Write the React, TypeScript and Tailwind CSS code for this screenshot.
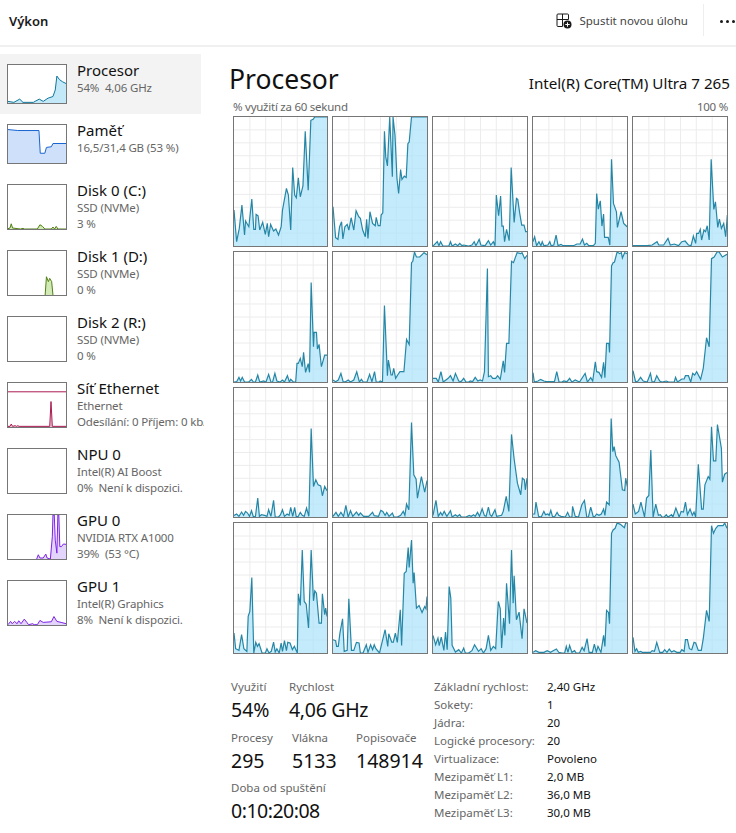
import React from 'react';

type CoreChart = { ox: number; oy: number; w: number; h: number; pts: string };

// points are in 3x pixel coords so they can be read straight off a zoomed crop
const cores: CoreChart[] = [
  { ox: 25, oy: 65, w: 282, h: 388, pts: '25,345 33,440 41,400 49,330 57,420 60,378 70,395 79,312 85,403 90,403 92,358 98,362 103,405 112,382 120,418 126,385 130,425 136,388 145,408 152,402 160,420 168,395 172,345 184,280 190,300 197,405 203,217 209,300 214,308 220,248 226,305 234,272 241,108 250,285 258,75 265,72 270,65 307,65' },
  { ox: 322, oy: 65, w: 285, h: 388, pts: '322,335 330,428 337,433 342,395 348,380 352,432 358,395 365,388 370,405 377,368 385,405 392,347 400,365 405,370 412,405 420,425 424,373 428,430 434,350 442,385 450,392 453,367 459,392 465,392 468,360 473,353 478,108 482,185 487,212 494,65 502,245 504,65 510,120 516,250 521,295 527,223 531,253 538,243 544,247 549,145 553,140 560,65 607,65' },
  { ox: 7, oy: 65, w: 285, h: 388, pts: '7,453 20,440 25,452 30,440 37,453 55,453 60,440 65,453 75,447 82,452 88,445 95,452 100,450 115,453 125,450 132,440 137,452 147,433 152,450 165,452 175,437 182,450 190,440 195,452 199,300 206,362 212,303 216,393 220,393 224,440 230,403 238,437 244,217 253,382 260,310 264,313 270,355 276,390 283,390 288,410 293,410' },
  { ox: 307, oy: 65, w: 285, h: 388, pts: '307,440 312,425 318,452 325,440 331,452 335,440 340,452 352,450 358,440 362,452 370,450 377,420 383,452 392,448 398,452 410,452 430,452 440,447 450,447 457,432 463,450 470,445 476,452 490,452 496,445 500,295 505,342 511,317 516,393 521,357 524,427 535,427 540,450 545,192 551,325 560,350 563,397 574,350 582,385 592,395' },
  { ox: 607, oy: 65, w: 285, h: 388, pts: '607,452 640,452 650,452 665,450 680,440 685,450 700,450 713,430 720,450 732,447 745,452 755,440 765,438 775,450 783,452 790,423 797,445 800,415 806,415 811,403 815,435 822,405 827,410 832,392 838,435 844,192 852,343 857,320 864,397 869,372 875,400 882,385 888,425 893,360' },

  { ox: 25, oy: 20, w: 282, h: 391, pts: '25,411 33,410 40,397 45,408 50,397 57,411 70,411 78,403 84,411 90,411 97,390 103,411 115,408 122,411 130,388 137,411 142,411 149,385 155,408 165,411 172,405 178,411 187,392 193,411 197,403 205,411 212,411 216,355 220,355 226,340 232,365 236,322 242,382 250,356 254,382 259,112 266,305 268,262 275,262 278,312 283,298 290,365 300,330 307,330' },
  { ox: 322, oy: 20, w: 285, h: 391, pts: '322,405 330,410 338,405 346,385 353,411 360,410 368,405 375,411 385,405 394,380 402,411 408,403 414,411 425,411 433,388 440,410 448,380 453,411 462,411 465,408 472,411 478,181 487,392 490,345 498,390 502,390 506,370 512,400 518,390 525,380 537,380 545,283 553,298 560,52 564,48 569,20 575,35 585,35 598,22 607,28' },
  { ox: 622, oy: 20, w: 285, h: 391, pts: '622,400 632,400 638,411 646,380 653,411 668,400 675,392 683,408 690,385 700,408 707,410 715,400 722,411 730,411 735,408 742,410 750,397 758,408 765,405 772,408 778,380 787,70 790,395 797,392 803,400 812,400 818,392 826,403 835,347 839,382 845,295 852,295 860,48 866,52 877,22 888,25 892,22 900,40 907,30' },
  { ox: 7, oy: 20, w: 285, h: 391, pts: '7,383 11,411 22,408 30,403 40,408 48,410 72,410 79,380 86,411 95,411 100,408 110,410 118,400 125,411 135,405 148,411 165,385 172,411 182,398 188,408 196,350 200,380 207,382 215,397 221,352 225,398 230,295 237,295 239,322 245,62 250,52 254,50 262,20 270,25 275,22 278,38 285,22 293,25' },
  { ox: 307, oy: 20, w: 285, h: 391, pts: '307,377 315,411 322,408 330,397 338,408 350,411 360,385 365,411 372,410 379,392 388,408 395,411 408,408 415,411 432,411 436,397 442,411 455,402 462,402 466,392 475,392 482,411 488,385 494,390 500,380 512,403 520,370 530,278 538,305 545,40 553,35 562,20 568,20 578,35 592,27' },

  { ox: 25, oy: 8, w: 282, h: 389, pts: '25,392 33,388 40,395 48,382 54,392 60,380 66,385 72,395 78,378 84,397 90,395 97,340 102,395 108,390 118,392 125,395 130,375 137,395 145,347 150,397 160,397 166,390 172,375 178,395 186,388 192,392 197,368 203,395 209,368 214,397 220,395 226,383 232,392 238,395 245,370 252,395 259,130 266,305 273,285 280,300 288,303 293,333 300,305 307,318' },
  { ox: 322, oy: 8, w: 285, h: 389, pts: '322,395 331,383 338,395 346,383 354,395 361,362 368,397 375,378 382,395 393,382 400,392 405,385 415,395 430,395 442,383 447,393 460,395 467,377 473,380 480,392 485,383 492,395 502,385 507,397 517,397 527,392 535,380 540,392 545,358 552,375 560,112 567,270 574,283 578,340 590,275 600,322 607,287' },
  { ox: 622, oy: 8, w: 285, h: 389, pts: '622,392 631,347 638,395 645,383 650,392 656,380 664,395 675,378 680,397 690,390 696,395 703,390 708,397 722,397 732,392 738,395 745,390 750,395 757,383 763,395 771,372 778,393 783,395 790,367 795,390 800,395 810,375 815,395 830,392 835,380 844,335 852,380 860,148 868,222 878,295 888,330 893,280 899,285 902,315 907,280' },
  { ox: 7, oy: 8, w: 285, h: 389, pts: '7,388 12,388 16,352 24,395 32,397 40,380 45,390 52,388 56,392 61,377 66,395 72,397 80,383 85,392 92,395 105,397 112,383 118,397 125,397 127,365 135,395 145,397 155,360 163,347 170,397 175,397 182,367 190,397 195,395 200,388 207,392 214,388 221,373 225,392 230,352 238,360 244,100 249,200 253,185 258,212 268,232 278,315 285,317 288,280 293,305' },
  { ox: 307, oy: 8, w: 285, h: 389, pts: '307,358 314,388 324,380 331,352 342,397 348,340 355,332 361,195 368,397 376,358 384,392 390,390 395,397 402,397 408,390 413,397 424,390 428,397 437,370 447,397 453,380 460,382 466,352 472,390 480,373 487,392 492,382 497,397 505,238 515,373 520,373 525,300 535,275 540,283 545,125 551,228 558,228 563,118 575,190 578,292 585,268 592,263' },

  { ox: 25, oy: 14, w: 282, h: 391, pts: '25,345 30,392 40,397 48,350 55,392 64,400 68,295 73,280 79,178 85,405 91,373 96,385 101,377 110,405 120,405 125,392 131,405 138,400 145,372 150,402 155,392 162,405 168,375 172,400 178,368 184,398 188,373 195,375 202,395 208,385 217,405 220,227 226,262 232,95 238,250 244,258 251,330 259,95 266,248 270,218 275,225 283,315 290,315 293,227 300,290 303,270 307,295' },
  { ox: 322, oy: 14, w: 285, h: 391, pts: '322,365 330,368 333,385 338,385 343,345 351,302 356,400 365,397 370,242 378,397 385,397 393,373 401,375 405,405 413,405 423,380 428,403 436,380 442,395 447,380 452,392 463,405 480,335 488,385 491,347 500,372 505,372 511,345 517,373 526,275 530,382 538,165 544,160 550,88 553,148 560,65 565,195 568,163 575,270 583,262 592,283 600,265 604,272 607,235' },
  { ox: 622, oy: 14, w: 285, h: 391, pts: '622,352 630,380 637,360 641,383 647,357 655,397 660,342 665,395 671,205 676,240 680,382 690,402 700,395 708,405 715,390 720,405 730,405 740,398 748,380 760,400 768,392 775,405 783,392 790,352 797,397 805,385 812,392 820,250 826,272 830,390 836,300 840,352 845,195 854,317 860,95 865,255 868,173 875,305 883,282 892,362 898,272 907,315' },
  { ox: 7, oy: 14, w: 285, h: 391, pts: '7,403 15,398 25,403 40,403 50,398 60,403 68,398 78,393 85,403 95,405 103,405 108,385 113,403 118,382 125,403 133,398 138,405 148,405 156,388 162,398 171,362 177,403 187,403 193,378 199,402 204,385 213,403 221,352 225,385 230,277 236,283 239,317 245,45 250,35 256,30 262,14 272,18 284,28 288,14 293,14' },
  { ox: 307, oy: 14, w: 285, h: 391, pts: '307,358 313,400 318,392 323,403 330,400 335,403 341,403 360,403 365,398 372,400 379,373 388,403 397,403 403,395 410,403 417,393 424,402 431,398 440,403 450,403 455,395 462,400 466,365 472,365 478,392 485,395 492,373 497,375 505,397 514,397 520,362 530,277 538,310 545,22 551,45 558,30 565,22 580,22 585,14 592,30' },
];

const CoreGraph: React.FC<{ chart: CoreChart }> = ({ chart }) => {
  const { ox, oy, w, h, pts } = chart;
  const first = pts.split(' ')[0].split(',')[0];
  const last = pts.split(' ').slice(-1)[0].split(',')[0];
  const base = oy + h;
  return (
    <div className="border border-[#767676] bg-white min-w-0 min-h-0">
      <svg className="block w-full h-full" viewBox={`${ox} ${oy} ${w} ${h}`} preserveAspectRatio="none">
        {[48, 96, 144, 192, 240].map(x => (
          <line key={x} x1={ox + x} x2={ox + x} y1={oy} y2={base} stroke="#ececec" strokeWidth={3} />
        ))}
        {[1, 2, 3, 4, 5, 6, 7, 8, 9].map(i => (
          <line key={i} x1={ox} x2={ox + w} y1={oy + (h * i) / 10} y2={oy + (h * i) / 10} stroke="#ececec" strokeWidth={3} />
        ))}
        <polygon points={`${first},${base} ${pts} ${last},${base}`} fill="#a9e2f9" fillOpacity={0.7} />
        <polyline points={pts} fill="none" stroke="#117a9c" strokeWidth={3.6} strokeOpacity={0.9} />
      </svg>
    </div>
  );
};

type SideItem = {
  title: string;
  lines: string[];
  stroke: string;
  fill: string;
  oy: number;
  pts?: string;
  hline?: number;
  selected?: boolean;
};

const sideItems: SideItem[] = [
  { title: 'Procesor', lines: ['54%  4,06 GHz'], stroke: '#0b7396', fill: '#c3e9f9', oy: 193, selected: true, pts: '22,305 40,308 58,298 68,308 100,308 105,305 118,298 130,305 145,295 160,290 167,270 172,227 180,238 190,245 200,250' },
  { title: 'Paměť', lines: ['16,5/31,4 GB (53 %)'], stroke: '#1561cf', fill: '#cfe0fb', oy: 373, pts: '22,387 52,390 117,390 121,460 135,460 140,442 155,440 160,430 200,430' },
  { title: 'Disk 0 (C:)', lines: ['SSD (NVMe)', '3 %'], stroke: '#4e7d0f', fill: '#d2eab5', oy: 553, pts: '22,687 28,685 32,672 36,685 60,688 68,686 72,688 112,688 120,675 128,680 135,688 155,688 160,682 165,688 170,680 175,688 200,688' },
  { title: 'Disk 1 (D:)', lines: ['SSD (NVMe)', '0 %'], stroke: '#4e7d0f', fill: '#d2eab5', oy: 31, pts: '136,166 140,110 146,125 150,115 156,125 160,166' },
  { title: 'Disk 2 (R:)', lines: ['SSD (NVMe)', '0 %'], stroke: '#4e7d0f', fill: '#d2eab5', oy: 229 },
  { title: 'Síť Ethernet', lines: ['Ethernet', 'Odesílání: 0 Příjem: 0 kb/s'], stroke: '#a8174f', fill: '#f0c3d5', oy: 427, hline: 454, pts: '22,560 28,560 32,553 36,560 44,558 48,560 52,558 56,560 150,560 154,484 158,560 200,560' },
  { title: 'NPU 0', lines: ['Intel(R) AI Boost', '0%  Není k dispozici.'], stroke: '#7a1fe6', fill: '#e3d4fb', oy: 25 },
  { title: 'GPU 0', lines: ['NVIDIA RTX A1000', '39%  (53 °C)'], stroke: '#7a1fe6', fill: '#e3d4fb', oy: 223, pts: '110,358 115,345 120,355 130,355 138,343 142,355 152,358 158,290 160,223 164,223 167,300 172,340 175,223 178,223 181,320 186,320 192,312 200,313' },
  { title: 'GPU 1', lines: ['Intel(R) Graphics', '8%  Není k dispozici.'], stroke: '#7a1fe6', fill: '#e3d4fb', oy: 421, pts: '22,555 30,545 35,552 42,545 50,552 55,543 62,552 72,538 80,548 85,555 98,552 102,555 112,555 120,542 130,548 155,546 163,530 172,545 185,548 200,552' },
];

const SideThumb: React.FC<{ item: SideItem; tall: boolean }> = ({ item, tall }) => {
  const h = tall ? 135 : 117;
  const base = item.oy + h;
  const { pts } = item;
  const first = pts ? pts.split(' ')[0].split(',')[0] : '0';
  const last = pts ? pts.split(' ').slice(-1)[0].split(',')[0] : '0';
  return (
    <div className={`w-[60px] shrink-0 border border-[#767676] bg-white ${tall ? 'h-[46px]' : 'h-[40px]'}`}>
      <svg className="block w-full h-full" viewBox={`22 ${item.oy} 178 ${h}`} preserveAspectRatio="none">
        {item.hline && <line x1={22} x2={200} y1={item.hline} y2={item.hline} stroke={item.stroke} strokeWidth={3} />}
        {pts && <polygon points={`${first},${base} ${pts} ${last},${base}`} fill={item.fill} />}
        {pts && <polyline points={pts} fill="none" stroke={item.stroke} strokeWidth={3} />}
      </svg>
    </div>
  );
};

const Sidebar: React.FC = () => (
  <div className="w-[204px] shrink-0 pt-[7px] overflow-hidden">
    {sideItems.map(item => {
      const tall = item.lines.length > 1;
      return (
        <div
          key={item.title}
          className={`flex w-[201px] pl-[7px] ${tall ? 'h-[66px]' : 'h-[60px]'} ${item.selected ? 'bg-[#f3f3f3]' : ''} pt-[10px] items-start`}
        >
          <SideThumb item={item} tall={tall} />
          <div className="ml-[10px] -mt-[4px] whitespace-nowrap">
            <div className="text-[15px] leading-[20px] text-[#111]">{item.title}</div>
            {item.lines.map(line => (
              <div key={line} className="text-[11.5px] tracking-[-0.15px] leading-[16px] text-[#666] whitespace-pre">{line}</div>
            ))}
          </div>
        </div>
      );
    })}
  </div>
);

const Stat: React.FC<{ label: string; value: string; className?: string; valueClass?: string }> = ({ label, value, className, valueClass }) => (
  <div className={className}>
    <div className="text-[11.5px] leading-[18px] text-[#666]">{label}</div>
    <div className={`text-[19.5px] leading-[28px] text-[#111] ${valueClass ?? ''}`}>{value}</div>
  </div>
);

const specs = [
  ['Základní rychlost:', '2,40 GHz'],
  ['Sokety:', '1'],
  ['Jádra:', '20'],
  ['Logické procesory:', '20'],
  ['Virtualizace:', 'Povoleno'],
  ['Mezipaměť L1:', '2,0 MB'],
  ['Mezipaměť L2:', '36,0 MB'],
  ['Mezipaměť L3:', '30,0 MB'],
];

export default function App() {
  return (
    <div className="w-[736px] h-[833px] bg-white flex flex-col overflow-hidden font-['Noto_Sans','Open_Sans',sans-serif]">
      <header className="h-[47px] shrink-0 border-b-2 border-[#f0f0f0] flex items-start">
        <div className="pl-[9px] pt-[11px] text-[13px] leading-[20px] font-semibold text-[#1a1a1a]">Výkon</div>
        <div className="ml-auto flex items-start">
          <svg className="mt-[13px] mr-[7px]" width="16" height="16" viewBox="0 0 16 16" fill="none" stroke="#1a1a1a" strokeWidth="1">
            <path d="M6.5 13.5H2a1 1 0 0 1-1-1V2a1 1 0 0 1 1-1h9.5a1 1 0 0 1 1 1v4.5M1 6.5h11.5M6.5 1v12.5" />
            <circle cx="11.5" cy="11.5" r="4" fill="#1a1a1a" stroke="none" />
            <path d="M11.5 9.3v4.4M9.3 11.5h4.4" stroke="#fff" />
          </svg>
          <div className="pt-[11px] text-[11.5px] tracking-[0.02px] leading-[20px] text-[#444] whitespace-nowrap">Spustit novou úlohu</div>
          <div className="w-px h-[32px] mt-[4px] ml-[15px] bg-[#eeeeee]" />
          <div className="flex gap-[3px] mt-[20px] ml-[16px] mr-[1px]">
            <div className="w-[3px] h-[3px] rounded-full bg-[#1a1a1a]" />
            <div className="w-[3px] h-[3px] rounded-full bg-[#1a1a1a]" />
            <div className="w-[3px] h-[3px] rounded-full bg-[#1a1a1a]" />
          </div>
        </div>
      </header>

      <div className="flex flex-1 min-h-0">
        <Sidebar />
        <main className="w-[495px] ml-[29px] flex flex-col">
          <div className="flex items-end justify-between h-[51px] -ml-[4px] -mr-[2px]">
            <div className="text-[26.5px] leading-[38px] text-[#111]">Procesor</div>
            <div className="text-[15.2px] leading-[22px] text-[#111] pb-[4px]">Intel(R) Core(TM) Ultra 7 265</div>
          </div>
          <div className="flex justify-between h-[18px] text-[11.5px] tracking-[-0.25px] leading-[18px] text-[#666]">
            <span>% využití za 60 sekund</span>
            <span>100 %</span>
          </div>
          <div className="grid grid-cols-[95px_96px_96px_96px_96px] grid-rows-[131px_132px_131px_132px] gap-[4px] h-[538px]">
            {cores.map(c => (
              <CoreGraph key={`${c.ox}-${c.oy}`} chart={c} />
            ))}
          </div>

          <div className="flex pt-[24px]">
            <div className="w-[203px] shrink-0 -ml-[2px]">
              <div className="flex h-[51px]">
                <Stat label="Využití" value="54%" className="w-[58px]" />
                <Stat label="Rychlost" value="4,06 GHz" valueClass="tracking-[-0.3px]" />
              </div>
              <div className="flex h-[50px]">
                <Stat label="Procesy" value="295" className="w-[61px]" />
                <Stat label="Vlákna" value="5133" className="w-[64px]" />
                <Stat label="Popisovače" value="148914" />
              </div>
              <Stat label="Doba od spuštění" value="0:10:20:08" valueClass="tracking-[-0.5px]" />
            </div>
            <div className="grid grid-cols-[113px_auto] auto-rows-[18px] text-[11.5px] leading-[18px]">
              {specs.map(([k, v]) => (
                <React.Fragment key={k}>
                  <div className="text-[#666] whitespace-nowrap">{k}</div>
                  <div className="text-[#111]">{v}</div>
                </React.Fragment>
              ))}
            </div>
          </div>
        </main>
      </div>
    </div>
  );
}
